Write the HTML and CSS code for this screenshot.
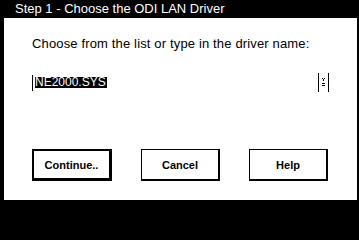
FILE: index.html
```html
<!DOCTYPE html>
<html>
<head>
<meta charset="utf-8">
<link rel="stylesheet" href="styles.css">
</head>
<body>
<div class="window">
  <div class="title">Step 1 - Choose the ODI LAN Driver</div>
  <div class="panel">
    <div class="label">Choose from the list or type in the driver name:</div>
    <div class="field">
      <span class="cursor"></span>
      <span class="value">NE2000.SYS</span>
      <span class="drop">
        <svg width="11" height="19" viewBox="0 0 11 19">
          <rect x="0" y="0" width="1" height="19" fill="#000"/>
          <rect x="10" y="0" width="1" height="19" fill="#000"/>
          <rect x="4" y="5" width="1" height="1" fill="#000"/>
          <rect x="6" y="5" width="1" height="1" fill="#000"/>
          <rect x="5" y="6" width="1" height="2" fill="#000"/>
          <rect x="4" y="10" width="3" height="1" fill="#000"/>
          <rect x="4" y="12" width="3" height="1" fill="#000"/>
        </svg>
      </span>
    </div>
    <div class="buttons">
      <div class="btn default">Continue..</div>
      <div class="btn">Cancel</div>
      <div class="btn">Help</div>
    </div>
  </div>
</div>
</body>
</html>
```
FILE: styles.css
```css
html, body {
  margin: 0;
  padding: 0;
  background: #000;
}
.window {
  width: 359px;
  height: 204px;
  display: flex;
  flex-direction: column;
  background: #000;
  font-family: "Liberation Sans", Arial, sans-serif;
  color: #000;
}
.title {
  height: 18px;
  line-height: 18px;
  padding-left: 15px;
  color: #fff;
  font-size: 13px;
  white-space: pre;
}
.panel {
  flex: 1;
  background: #fff;
  margin: 0 2px 4px 4px;
  padding: 18px 0 0 28px;
  box-sizing: border-box;
}
.label {
  font-size: 13px;
  letter-spacing: 0.15px;
  line-height: 15px;
  height: 15px;
}
.field {
  margin-top: 22px;
  display: flex;
  align-items: center;
  height: 19px;
  padding-right: 28px;
}
.cursor {
  width: 1px;
  height: 16px;
  background: #000;
  margin-right: 2px;
}
.value {
  background: #000;
  color: #fff;
  font-size: 12px;
  line-height: 11px;
  height: 11px;
  padding: 0 1px 0 0;
}
.drop {
  margin-left: auto;
  display: flex;
}
.buttons {
  margin-top: 57px;
  display: flex;
  gap: 29px;
}
.btn {
  width: 79px;
  height: 32px;
  box-sizing: border-box;
  border-style: solid;
  border-color: #000;
  border-width: 1px 2px 2px 1px;
  display: flex;
  align-items: center;
  justify-content: center;
  font-weight: bold;
  font-size: 11px;
}
.btn.default {
  width: 80px;
  border-width: 2px 3px 3px 2px;
}
```
